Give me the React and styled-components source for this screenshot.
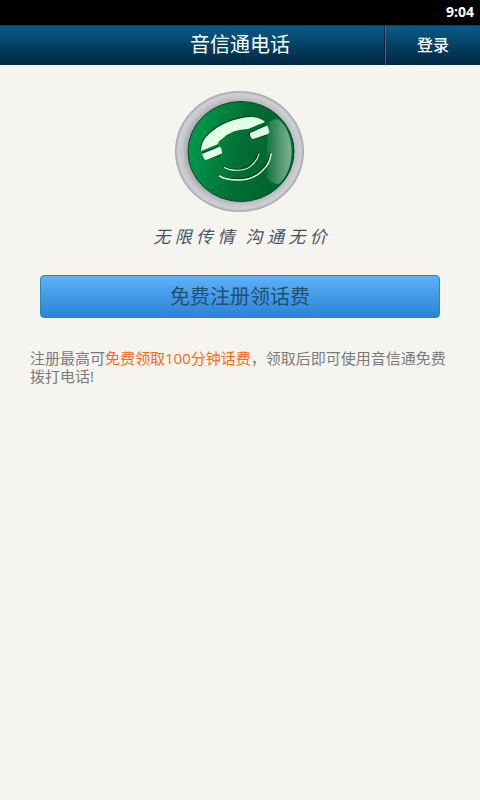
import React from "react";
import styled, { createGlobalStyle } from "styled-components";

const GlobalStyle = createGlobalStyle`
  * { box-sizing: border-box; }
  body {
    margin: 0;
    background: #f5f4ef;
    font-family: "Open Sans", "Noto Sans", "Noto Sans CJK SC", sans-serif;
  }
`;

const Screen = styled.div`
  display: flex;
  flex-direction: column;
  min-height: 100vh;
  background: #f5f4ef;
`;

const StatusBar = styled.div`
  display: flex;
  justify-content: flex-end;
  height: 25px;
  padding: 0 6px;
  background: #000;
  color: #fff;
  font-size: 14px;
  font-weight: 700;
  line-height: 24px;
`;

const Header = styled.header`
  display: grid;
  grid-template-columns: 95px 1fr 95px;
  height: 40px;
  background: linear-gradient(#075c87, #00263f);
  border-top: 1px solid #04476a;
`;

const Title = styled.h1`
  grid-column: 2;
  margin: 0;
  color: #fff;
  font-size: 20px;
  font-weight: 400;
  line-height: 37px;
  text-align: center;
`;

const LoginButton = styled.button`
  padding: 0;
  border: 0;
  border-left: 1px solid #2c7397;
  box-shadow: -1px 0 #002138;
  background: transparent;
  color: #fff;
  font: inherit;
  font-size: 16px;
  font-weight: 500;
  line-height: 37px;
`;

const Content = styled.main`
  display: flex;
  flex-direction: column;
  align-items: center;
  padding: 26px 30px;
`;

const Logo = styled.svg`
  display: block;
  width: 130px;
  height: 121px;
`;

const Tagline = styled.p`
  display: flex;
  gap: 11px;
  margin: 12px 0 0;
  color: #445366;
  font-size: 17px;
  font-style: italic;
  line-height: 26px;
`;

const RegisterButton = styled.button`
  align-self: stretch;
  height: 43px;
  margin: 25px 10px 0;
  padding: 0;
  border: 1px solid #2c86bd;
  border-radius: 4px;
  background: linear-gradient(#5fb1f8, #2a83d5);
  color: #20506e;
  font: inherit;
  font-size: 20px;
  line-height: 41px;
`;

const Notice = styled.p`
  align-self: stretch;
  margin: 31px 0 0;
  color: #7b7b7b;
  font-size: 15px;
  line-height: 18px;
`;

const Highlight = styled.span`
  color: #ff6a10;
`;

function PhoneLogo() {
  return (
    <Logo viewBox="0 0 130 121" role="img" aria-label="音信通">
      <defs>
        <radialGradient id="ring">
          <stop offset="0.8" stopColor="#a3a5ab" />
          <stop offset="0.88" stopColor="#c3c4c9" />
          <stop offset="0.95" stopColor="#cfd0d4" />
          <stop offset="1" stopColor="#a2a4aa" />
        </radialGradient>
        <linearGradient id="face" x1="0" y1="0.4" x2="1" y2="0.6">
          <stop offset="0" stopColor="#009c4c" />
          <stop offset="0.5" stopColor="#006e33" />
          <stop offset="1" stopColor="#006229" />
        </linearGradient>
        <linearGradient id="shine">
          <stop offset="0" stopColor="#fff" stopOpacity="0.08" />
          <stop offset="1" stopColor="#d8eadb" stopOpacity="0.58" />
        </linearGradient>
      </defs>
      <ellipse cx="64.5" cy="60.5" rx="64.5" ry="60.5" fill="url(#ring)" />
      <ellipse cx="66" cy="60.5" rx="53" ry="50" fill="url(#face)" stroke="#004d22" />
      <path d="M92 34 Q96 28 103 28 C120 40 122 77 104 93 Q97 93 92 87Z" fill="url(#shine)" />
      <g transform="translate(-1 -1)" fill="#002f16" opacity="0.65">
        <path d="M26 60 Q26 50 34 43 C45 33 59 27 76 26 C83 26 87 28 90 31 L73 39 Q56 38 46 49 Q43 51 43 54Z" />
        <path d="M28 62 L44 56 L48 63 L46 66 L31 70Z" />
        <path d="M74 43 L92 35 L95 43 L92 46 L77 49Z" />
      </g>
      <path d="M26 60 Q26 50 34 43 C45 33 59 27 76 26 C83 26 87 28 90 31 L73 38 Q57 38 47 48 Q43 50 43 53Z" fill="#e0ffe6" />
      <path d="M27 63 L44 56 Q46 55 47 61 Q48 62 46 63 L31 69 Q29 69 28 65Z" fill="#e0ffe6" />
      <path d="M75 42 L91 35 Q93 34 94 40 Q95 41 93 43 L78 48 Q76 48 75 44Z" fill="#e0ffe6" />
      <g fill="none" stroke="#003b1a" strokeWidth="1.3" strokeLinecap="round" transform="translate(-1 -1)">
        <path d="M49.5 76.5 Q55 79.5 63 79.3 Q73 79 78 73 Q83 68 84 63" />
        <path d="M44.5 85 Q51 89 63 89 Q78 89 87 80 Q95 73 96 63" />
      </g>
      <g fill="none" stroke="#dbfbe1" strokeLinecap="round">
        <path strokeWidth="1.1" d="M49.5 76.5 Q55 79.5 63 79.3 Q73 79 78 73 Q83 68 84 63" />
        <path strokeWidth="1.5" d="M44.5 85 Q51 89 63 89 Q78 89 87 80 Q95 73 96 63" />
      </g>
    </Logo>
  );
}

export default function App() {
  return (
    <>
      <GlobalStyle />
      <Screen>
        <StatusBar>9:04</StatusBar>
        <Header>
          <Title>音信通电话</Title>
          <LoginButton type="button">登录</LoginButton>
        </Header>
        <Content>
          <PhoneLogo />
          <Tagline>
            <span>无 限 传 情</span>
            <span>沟 通 无 价</span>
          </Tagline>
          <RegisterButton type="button">免费注册领话费</RegisterButton>
          <Notice>
            <span>注册最高可</span>
            <Highlight>免费领取100分钟话费</Highlight>
            <span>，领取后即可使用音信通免费拨打电话!</span>
          </Notice>
        </Content>
      </Screen>
    </>
  );
}
